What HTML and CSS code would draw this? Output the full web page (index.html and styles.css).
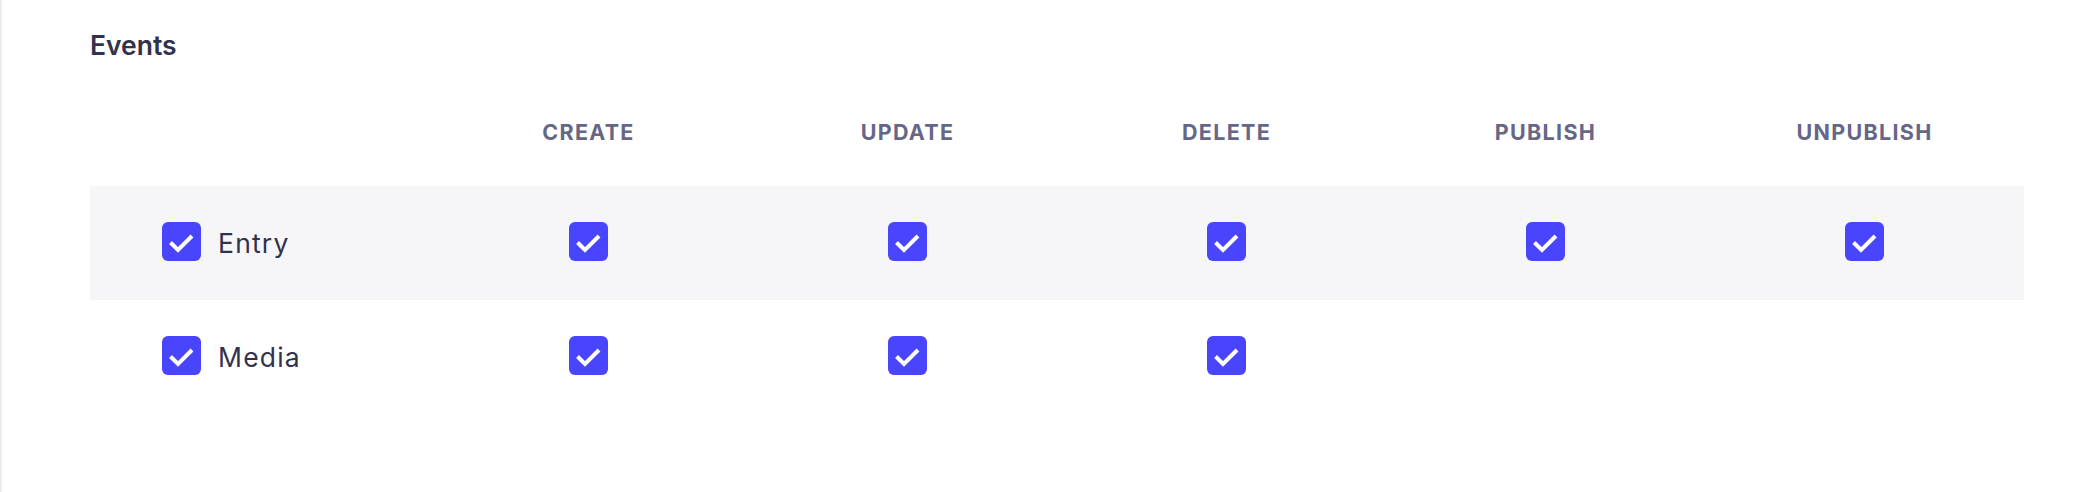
FILE: index.html
```html
<!DOCTYPE html>
<html lang="en">
<head>
<meta charset="utf-8">
<title>Events</title>
<link rel="stylesheet" href="styles.css">
</head>
<body>
<div class="page">
  <div class="stripe"></div>
  <main class="content">
    <h2 class="title">Events</h2>
    <div class="table">
      <div class="row head">
        <div class="cell first"></div>
        <div class="cell th">CREATE</div>
        <div class="cell th">UPDATE</div>
        <div class="cell th">DELETE</div>
        <div class="cell th">PUBLISH</div>
        <div class="cell th">UNPUBLISH</div>
      </div>
      <div class="row shaded">
        <div class="cell first">
          <span class="box"><svg viewBox="0 0 39 39"><polyline points="8.5,20.5 16,28 30,14"/></svg></span>
          <span class="label">Entry</span>
        </div>
        <div class="cell"><span class="box"><svg viewBox="0 0 39 39"><polyline points="8.5,20.5 16,28 30,14"/></svg></span></div>
        <div class="cell"><span class="box"><svg viewBox="0 0 39 39"><polyline points="8.5,20.5 16,28 30,14"/></svg></span></div>
        <div class="cell"><span class="box"><svg viewBox="0 0 39 39"><polyline points="8.5,20.5 16,28 30,14"/></svg></span></div>
        <div class="cell"><span class="box"><svg viewBox="0 0 39 39"><polyline points="8.5,20.5 16,28 30,14"/></svg></span></div>
        <div class="cell"><span class="box"><svg viewBox="0 0 39 39"><polyline points="8.5,20.5 16,28 30,14"/></svg></span></div>
      </div>
      <div class="row">
        <div class="cell first">
          <span class="box"><svg viewBox="0 0 39 39"><polyline points="8.5,20.5 16,28 30,14"/></svg></span>
          <span class="label">Media</span>
        </div>
        <div class="cell"><span class="box"><svg viewBox="0 0 39 39"><polyline points="8.5,20.5 16,28 30,14"/></svg></span></div>
        <div class="cell"><span class="box"><svg viewBox="0 0 39 39"><polyline points="8.5,20.5 16,28 30,14"/></svg></span></div>
        <div class="cell"><span class="box"><svg viewBox="0 0 39 39"><polyline points="8.5,20.5 16,28 30,14"/></svg></span></div>
        <div class="cell"></div>
        <div class="cell"></div>
      </div>
    </div>
  </main>
</div>
</body>
</html>
```

FILE: styles.css
```css
html, body {
  margin: 0;
  padding: 0;
  background: #ffffff;
}

body {
  font-family: Inter, "Noto Sans", "Liberation Sans", sans-serif;
  color: #32324d;
}

.page {
  display: flex;
  width: 2098px;
  height: 492px;
  overflow: hidden;
}

.stripe {
  width: 2px;
  flex: none;
  background: #eaeaef;
}

.content {
  padding: 29px 0 0 88px;
}

.title {
  margin: 0;
  font-size: 26.5px;
  line-height: 32px;
  font-weight: 600;
  color: #32324d;
}

.table {
  margin-top: 16px;
  width: 1934px;
}

.row {
  display: grid;
  grid-template-columns: 339px repeat(5, 1fr);
  height: 114px;
}

.row.head {
  height: 109px;
}

.row.shaded {
  background: #f6f6f9;
}

.cell {
  display: flex;
  align-items: center;
  justify-content: center;
}

.cell.first {
  justify-content: flex-start;
  padding-left: 72px;
}

.th {
  font-size: 21.5px;
  line-height: 26px;
  font-weight: 700;
  letter-spacing: 1.3px;
  color: #666687;
}

.box {
  width: 39px;
  height: 39px;
  border-radius: 6px;
  background: #4945ff;
  display: flex;
  margin-bottom: 4px;
  flex: none;
}

.box svg {
  width: 39px;
  height: 39px;
}

.box polyline {
  fill: none;
  stroke: #ffffff;
  stroke-width: 4;
  stroke-linecap: butt;
  stroke-linejoin: miter;
}

.label {
  margin-left: 17px;
  font-size: 26.5px;
  line-height: 30px;
  font-weight: 400;
  letter-spacing: 1.2px;
  color: #32324d;
}
```
